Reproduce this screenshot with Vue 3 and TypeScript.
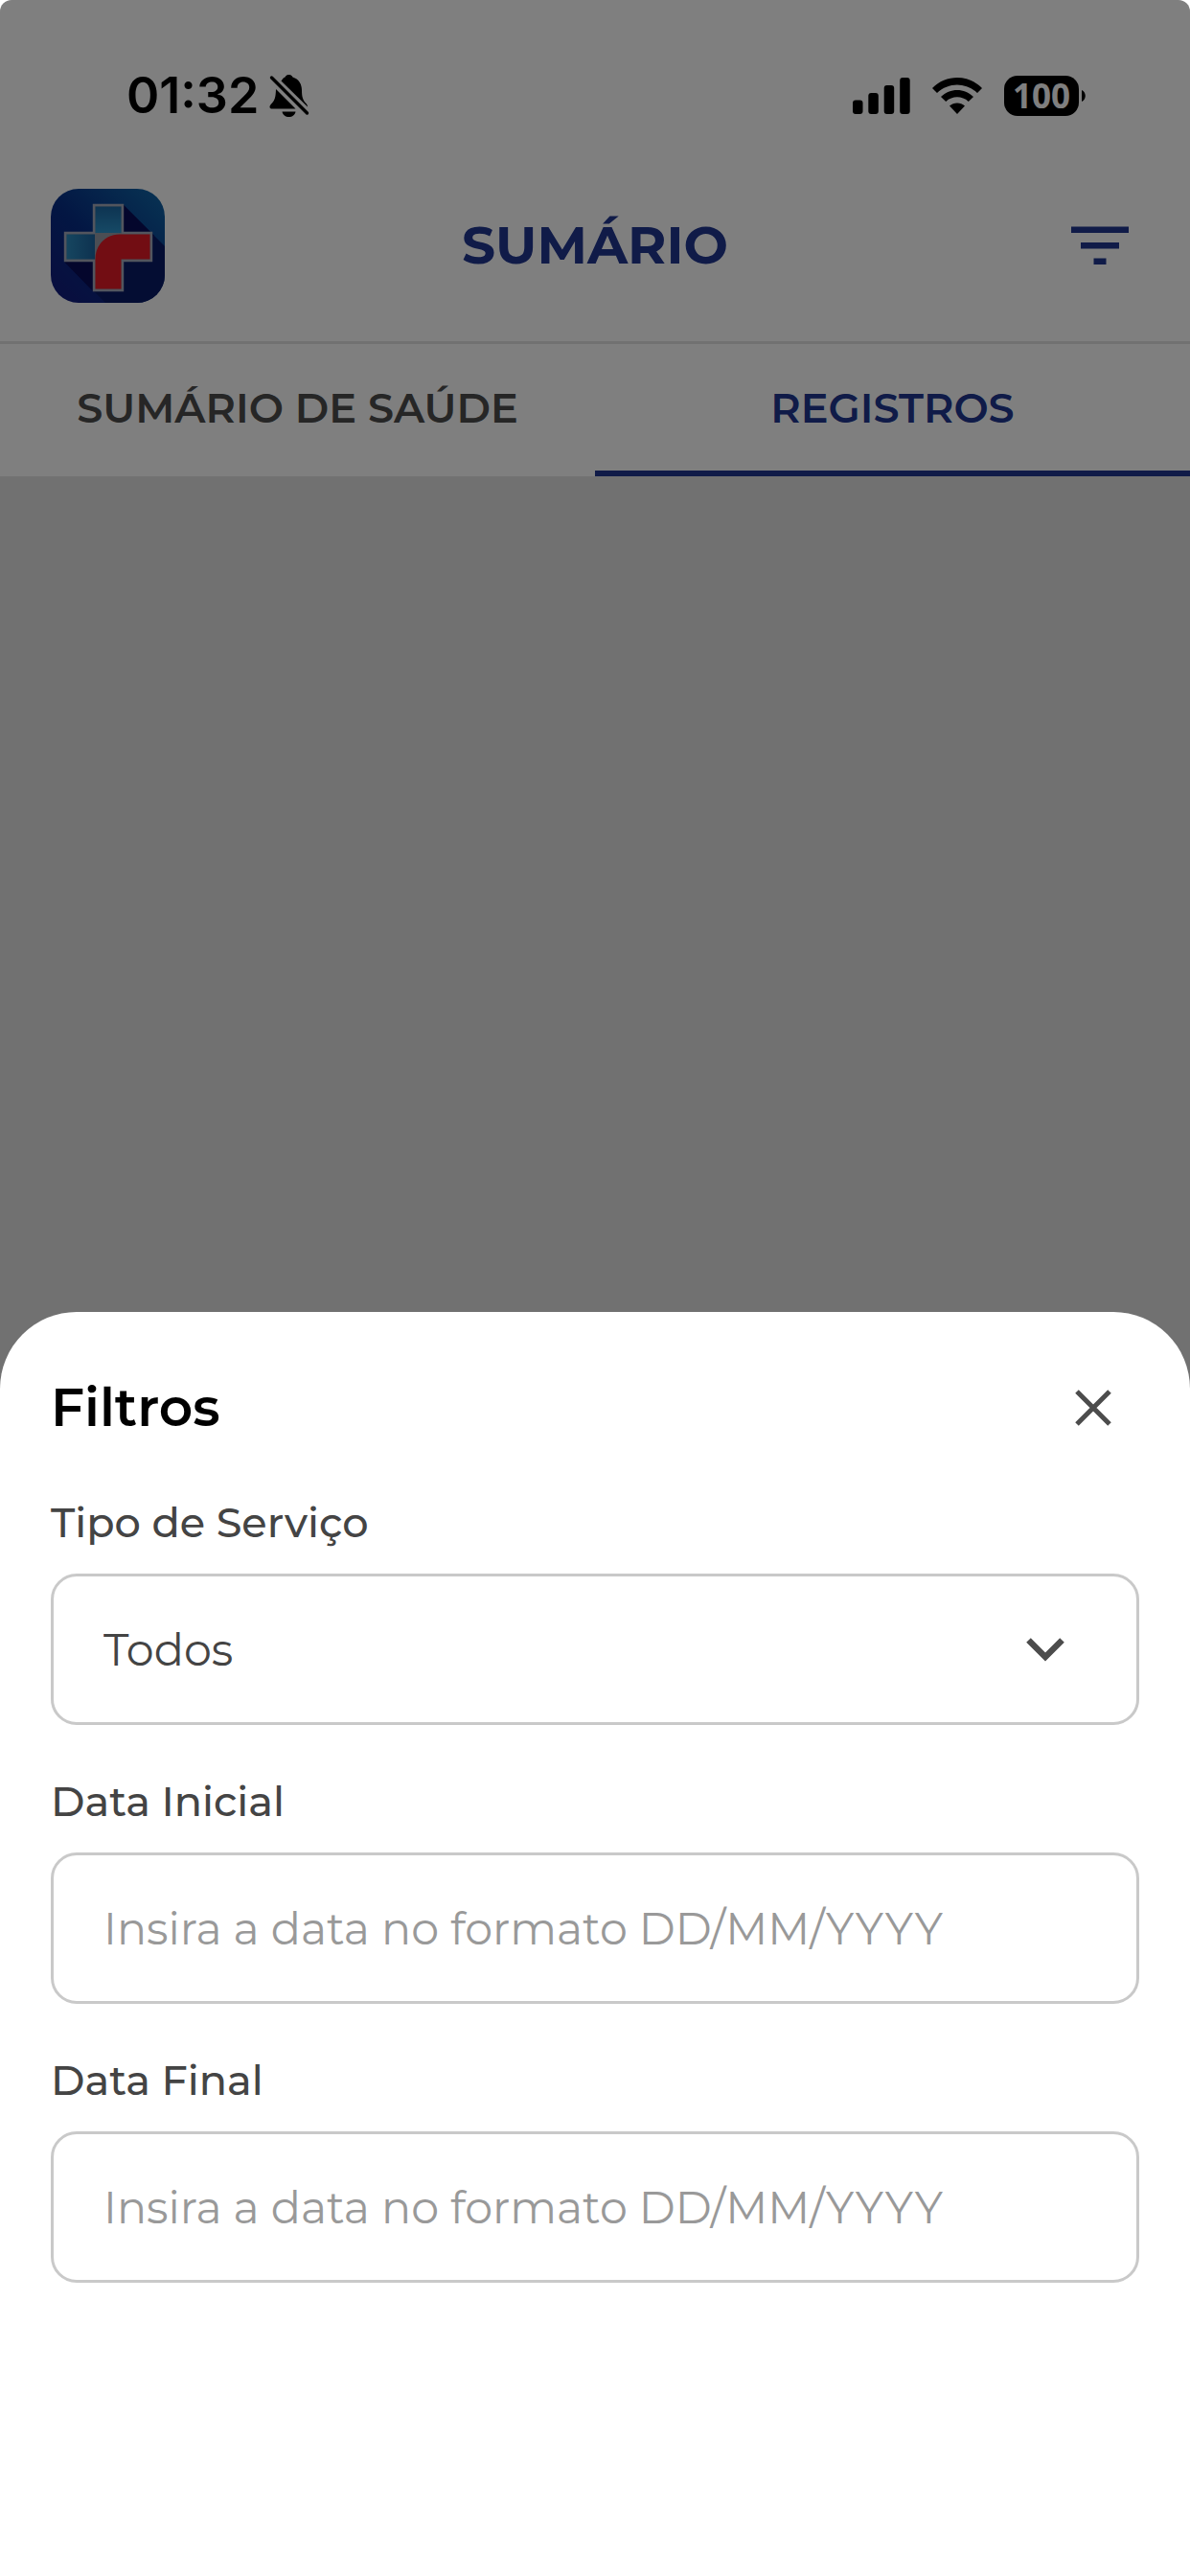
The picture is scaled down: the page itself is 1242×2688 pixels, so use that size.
<script setup lang="ts">
import { ref } from 'vue'

interface Tab {
  id: string
  label: string
}

interface DateField {
  id: string
  label: string
}

const tabs: Tab[] = [
  { id: 'saude', label: 'SUMÁRIO DE SAÚDE' },
  { id: 'registros', label: 'REGISTROS' },
]
const activeTab = ref('registros')

const services: string[] = ['Todos', 'Consultas', 'Exames', 'Vacinas']
const service = ref('Todos')

const dateFields: DateField[] = [
  { id: 'inicial', label: 'Data Inicial' },
  { id: 'final', label: 'Data Final' },
]
const dates = ref<Record<string, string>>({ inicial: '', final: '' })

const sheetOpen = ref(true)
</script>

<template>
  <div class="screen">
    <div class="status">
      <div class="status-left">
        <span class="clock">01:32</span>
        <svg class="bell" width="42" height="46" viewBox="0 0 42 46" aria-hidden="true">
          <path d="M12.500 7.500C14 5 15 4 16.500 3.500C17.500 1.500 19 1 20.500 1C22 1 23.500 1.500 24.500 3.500C31 5.500 34 11 34 17C34 24 35 27 38 30.500C39.500 32 40 33 40 34.500Z" />
          <path d="M7 16C6.700 24 6 27 3 30.500C1 32.500 .5 33.500 .5 34.500C.5 36 1.500 36.500 3 36.500H27.500Z" />
          <path d="M13.500 39.500H27.500C27 43 24 45 20.500 45C17 45 14 43 13.500 39.500Z" />
          <path d="M2.500 4L39.500 41" fill="none" stroke="#000" stroke-width="3.400" stroke-linecap="round" />
        </svg>
      </div>
      <div class="status-right">
        <svg width="60" height="38" viewBox="0 0 60 38" aria-hidden="true">
          <rect x="0" y="23.500" width="10.500" height="14.500" rx="3" />
          <rect x="16.300" y="16" width="10.500" height="22" rx="3" />
          <rect x="32.700" y="8" width="10.500" height="30" rx="3" />
          <rect x="49.200" y="0" width="10.500" height="38" rx="3" />
        </svg>
        <svg width="52" height="38" viewBox="0 0 52 38" aria-hidden="true">
          <path d="M0 11C14 -3.600 38 -3.600 52 11L47 16C35 4.600 17 4.600 5 16Z" />
          <path d="M9 20C18.500 10.600 33.500 10.600 43 20L37.800 25C31 18.800 21 18.800 14.200 25Z" />
          <path d="M18 29.500C22.500 25.500 29.500 25.500 34 29.500L26 38Z" />
        </svg>
        <div class="battery">
          <span class="battery-level">100</span>
          <svg width="4" height="12" viewBox="0 0 4 12" aria-hidden="true"><path d="M0 0C5 2 5 10 0 12Z" /></svg>
        </div>
      </div>
    </div>

    <header class="header">
      <svg class="logo" width="119" height="119" viewBox="0 0 119 119" role="img" aria-label="Logo">
        <defs>
          <linearGradient id="tile" x1="0" y1="1" x2="1" y2="0">
            <stop offset="0" stop-color="#141a7c" />
            <stop offset=".45" stop-color="#062c86" />
            <stop offset="1" stop-color="#1068a8" />
          </linearGradient>
          <linearGradient id="armTop" x1="0" y1="0" x2="0" y2="1">
            <stop offset="0" stop-color="#1c68a4" />
            <stop offset="1" stop-color="#2c94cc" />
          </linearGradient>
          <linearGradient id="armLeft" x1="0" y1="0" x2="1" y2="0">
            <stop offset="0" stop-color="#2c8cc0" />
            <stop offset="1" stop-color="#1c64a0" />
          </linearGradient>
          <clipPath id="tileClip"><rect width="119" height="119" rx="29" /></clipPath>
        </defs>
        <g clip-path="url(#tileClip)">
          <rect width="119" height="119" fill="url(#tile)" />
          <path d="M76 17L119 60V119H57L14 76Z" fill="#081b66" />
          <path d="M76 17L108 49H76ZM14 76H44V107Z" fill="#080c58" />
        </g>
        <path d="M45 17H75V46H105V75H75V106H45V75H15V46H45Z" fill="#969ca8" stroke="#a4aabc" stroke-width="2.400" />
        <path d="M46.500 18.500H73.500V46H46.500Z" fill="url(#armTop)" />
        <path d="M16.500 47.500H46V73.500H16.500Z" fill="url(#armLeft)" />
        <path d="M46.500 104.500V73C46.500 58 58 47.500 72 47.500H103.500V73.500H73.500V104.500Z" fill="#e41a26" />
      </svg>
      <h1 class="title">SUMÁRIO</h1>
      <button class="icon-button filter" type="button" aria-label="Filtrar" @click="sheetOpen = true">
        <svg width="82" height="82" viewBox="0 0 82 82" aria-hidden="true">
          <path d="M11 21.500H71V28H11ZM21 38H61V44.500H21ZM34.500 54.500H47.500V61H34.500Z" fill="#203690" />
        </svg>
      </button>
    </header>

    <nav class="tabs" role="tablist">
      <button
        v-for="tab in tabs"
        :key="tab.id"
        class="tab"
        :class="{ active: tab.id === activeTab }"
        type="button"
        role="tab"
        :aria-selected="tab.id === activeTab"
        @click="activeTab = tab.id"
      >
        {{ tab.label }}
      </button>
    </nav>

    <main class="content"></main>

    <div v-if="sheetOpen" class="overlay">
      <section class="sheet" role="dialog" aria-labelledby="sheet-title">
        <div class="sheet-head">
          <h2 id="sheet-title" class="sheet-title">Filtros</h2>
          <button class="icon-button close" type="button" aria-label="Fechar" @click="sheetOpen = false">
            <svg width="38" height="38" viewBox="0 0 38 38" aria-hidden="true">
              <path d="M2 2L36 36M36 2L2 36" fill="none" stroke="#4c4c4c" stroke-width="5" />
            </svg>
          </button>
        </div>

        <form class="fields" @submit.prevent>
          <div class="field">
            <label class="label" for="servico">Tipo de Serviço</label>
            <div class="select-wrap">
              <select id="servico" v-model="service" class="control">
                <option v-for="item in services" :key="item">{{ item }}</option>
              </select>
              <svg class="chevron" width="40" height="26" viewBox="0 0 40 26" aria-hidden="true">
                <path d="M2.500 3.500L20 21L37.500 3.500" fill="none" stroke="#4c4c4c" stroke-width="6.500" />
              </svg>
            </div>
          </div>
          <div v-for="field in dateFields" :key="field.id" class="field">
            <label class="label" :for="field.id">{{ field.label }}</label>
            <input
              :id="field.id"
              v-model="dates[field.id]"
              class="control"
              type="text"
              inputmode="numeric"
              placeholder="Insira a data no formato DD/MM/YYYY"
            />
          </div>
        </form>
      </section>
    </div>
  </div>
</template>

<style>
body {
  margin: 0;
  background: #fff;
}
</style>

<style scoped>
.screen {
  position: relative;
  display: flex;
  flex-direction: column;
  min-height: 100vh;
  background: #fff;
  font-family: Montserrat, Inter, sans-serif;
}

.screen * {
  box-sizing: border-box;
}

svg {
  display: block;
}

.status {
  display: flex;
  align-items: center;
  justify-content: space-between;
  height: 156px;
  padding: 44px 109px 0 132px;
  font-family: Inter, sans-serif;
}

.status-left {
  display: flex;
  align-items: center;
  gap: 11px;
}

.clock {
  font-size: 52px;
  font-weight: 600;
  line-height: 60px;
}

.status-right {
  display: flex;
  align-items: center;
  gap: 23px;
}

.battery {
  display: flex;
  align-items: center;
  gap: 3px;
}

.battery-level {
  width: 78px;
  border-radius: 14px;
  background: #000;
  color: #fff;
  font-family: "Open Sans", sans-serif;
  font-size: 35px;
  font-weight: 700;
  line-height: 42px;
  text-align: center;
}

.header {
  display: grid;
  grid-template-columns: 1fr auto 1fr;
  align-items: center;
  height: 203px;
  padding: 0 53px;
  border-bottom: 3px solid #e2e2e2;
}

.title {
  margin: 0;
  color: #203690;
  font-size: 55px;
  font-weight: 700;
  line-height: 64px;
}

.icon-button {
  display: grid;
  place-items: center;
  padding: 0;
  border: 0;
  background: none;
  cursor: pointer;
}

.filter {
  justify-self: end;
}

.tabs {
  display: grid;
  grid-template-columns: 1fr 1fr;
}

.tab {
  height: 138px;
  padding: 0;
  border: 0;
  border-bottom: 6px solid transparent;
  background: #fff;
  color: #4c4c4c;
  font-family: inherit;
  font-size: 43px;
  font-weight: 600;
}

.tab.active {
  border-bottom-color: #203690;
  color: #203690;
}

.content {
  flex: 1;
  background: #e2e2e2;
}

.overlay {
  position: absolute;
  inset: 0;
  display: flex;
  flex-direction: column;
  justify-content: flex-end;
  border-radius: 12px 12px 0 0;
  background: rgba(0, 0, 0, 0.5);
}

.sheet {
  padding: 70px 53px 306px;
  border-radius: 80px 80px 0 0;
  background: #fff;
}

.sheet-head {
  display: flex;
  align-items: center;
  justify-content: space-between;
  margin-bottom: 63px;
}

.sheet-title {
  margin: 0;
  color: #000;
  font-size: 55px;
  font-weight: 600;
  line-height: 60px;
}

.close {
  width: 96px;
  height: 60px;
}

.fields {
  display: flex;
  flex-direction: column;
  gap: 53px;
}

.field {
  display: flex;
  flex-direction: column;
  gap: 26px;
}

.label {
  color: #444;
  font-size: 43px;
  font-weight: 500;
  line-height: 54px;
}

.select-wrap {
  display: grid;
  align-items: center;
}

.select-wrap > * {
  grid-area: 1 / 1;
}

.chevron {
  justify-self: end;
  margin-right: 78px;
  pointer-events: none;
}

.control {
  width: 100%;
  height: 158px;
  padding: 0 52px;
  border: 3px solid #c9c9c9;
  border-radius: 27px;
  outline: 0;
  appearance: none;
  background: #fff;
  color: #444;
  font-family: inherit;
  font-size: 46px;
  font-weight: 400;
}

.control::placeholder {
  color: #999;
  opacity: 1;
}
</style>
